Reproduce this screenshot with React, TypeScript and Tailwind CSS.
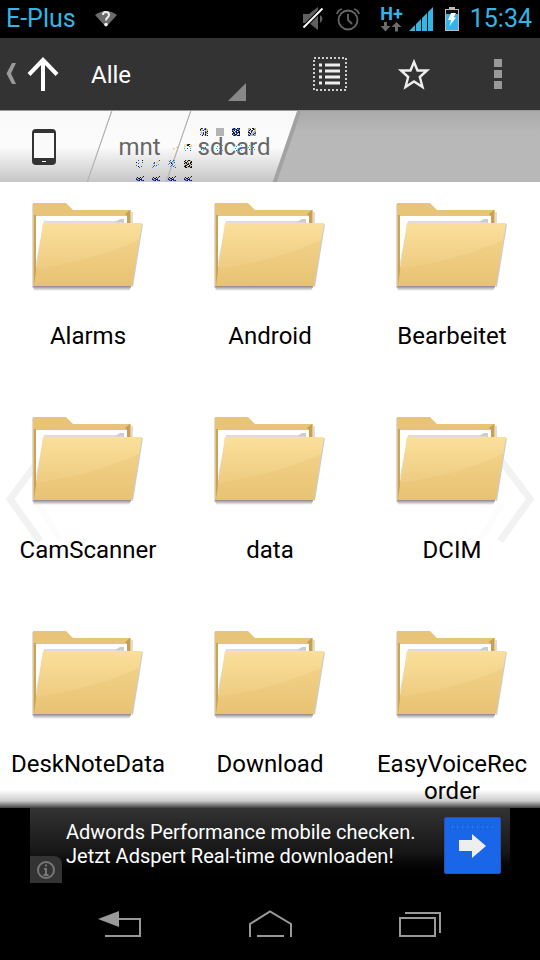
import React from "react";

const FOLDERS = ["Alarms", "Android", "Bearbeitet", "CamScanner", "data", "DCIM", "DeskNoteData", "Download", "EasyVoiceRecorder"];

function StatusBar() {
  return (
    <header className="flex h-[38px] items-center bg-black pr-2 pl-1.5 text-[25px] text-[#33b5e5]">
      <span>E-Plus</span>
      <svg className="ml-[18px]" width="24" height="18" viewBox="0 0 24 18" aria-hidden="true">
        <path d="M1 5Q12-3 23 5L12 17Z" fill="#6b6b6b" />
        <path d="M9 5q0-3 3-3t3 3q0 1-1.500 2.500T12 10.500" fill="none" stroke="#eee" strokeWidth="2" />
        <circle cx="12" cy="14.500" r="1.800" fill="#eee" />
      </svg>
      <div className="ml-auto flex items-center">
        <svg width="22" height="26" viewBox="0 0 22 26" aria-hidden="true">
          <path d="M1 8h6l9-7v23l-9-7H1zM18 9q5 3.500 0 8z" fill="#606060" />
          <path d="M1.500 21.500 20.500 2.500" stroke="#000" strokeWidth="4" />
          <path d="M1.500 21.500 20.500 2.500" stroke="#fff" strokeWidth="2" />
        </svg>
        <svg className="ml-3" width="24" height="24" viewBox="0 0 24 24" fill="none" stroke="#666" strokeWidth="1.800" aria-hidden="true">
          <circle cx="12" cy="13" r="9.500" />
          <path d="M12 7v6l4 4M1 7q1-4 5-5M23 7q-1-4-5-5" />
        </svg>
        <span className="ml-5 flex flex-col items-center">
          <span className="text-lg leading-4 font-bold">H+</span>
          <svg width="22" height="10" viewBox="0 0 22 10" fill="#6b6b6b" aria-hidden="true">
            <path d="M4 0h3v4h3.500l-5 5.500-5-5.500H4zM15 9.500V5h-3.500L16.500 0l5 5H18v4.500z" />
          </svg>
        </span>
        <svg className="ml-1.5" width="24" height="24" viewBox="0 0 24 24" fill="#33b5e5" aria-hidden="true">
          <path d="M0 24 6 18V24zM7 17l5-5V24H7zM13 11l5-5V24H13zM19 5l5-5v24h-5z" />
        </svg>
        <svg className="ml-3" width="14" height="24" viewBox="0 0 14 24" aria-hidden="true">
          <path d="M4 0h6v2h4v22H0V2h4z" fill="#bbb" />
          <path d="M1 3h12v4H1z" fill="#111" />
          <path d="M1 7h12v16H1z" fill="#33b5e5" />
          <path d="M6 6h5L8.500 10.500H11L4.500 19 6 13H3z" fill="#fff" />
        </svg>
        <span className="ml-[11px]">15:34</span>
      </div>
    </header>
  );
}

function ActionBar() {
  return (
    <div className="flex h-[72px] items-stretch bg-[#333] text-white">
      <button aria-label="Nach oben" className="pl-1.5">
        <svg width="54" height="36" viewBox="0 0 54 36" fill="none" aria-hidden="true">
          <path d="M6 7h4L5 17.500 10 28H6L0.500 17.500z" fill="#999" />
          <path d="M37 35V4M23 18.500 37 4 51 18.500" stroke="#fff" strokeWidth="4" />
        </svg>
      </button>
      <div className="relative ml-4 flex w-[170px]">
        <select aria-label="Filter" className="w-full appearance-none bg-transparent pt-0.5 pl-[15px] text-2xl text-white">
          <option>Alle</option>
        </select>
        <span className="pointer-events-none absolute right-0 bottom-[9px] size-[18px] bg-[#888] [clip-path:polygon(100%_0,100%_100%,0_100%)]" />
      </div>
      <div className="ml-auto grid grid-cols-[84px_84px_84px]">
        <button aria-label="Ansicht" className="flex items-center justify-center">
          <svg width="36" height="36" viewBox="0 0 36 36" aria-hidden="true">
            <rect x="2" y="2" width="32" height="32" fill="none" stroke="#ccc" strokeWidth="2" strokeDasharray="2 2" />
            <path d="M7 9h3M7 15h3M7 21h3M7 27h3M13 9h15M13 15h15M13 21h15M13 27h15" stroke="#eee" strokeWidth="3" />
          </svg>
        </button>
        <button aria-label="Favoriten" className="flex items-center justify-center">
          <svg width="34" height="34" viewBox="0 0 34 34" aria-hidden="true">
            <path d="M17 5 20.500 13.500 30 13.500 22.800 20 25.500 30 17 24.500 8.500 30 11.200 20 4 13.500 13.500 13.500Z" fill="none" stroke="#eee" strokeWidth="2.400" />
          </svg>
        </button>
        <button aria-label="Mehr" className="flex flex-col items-center justify-center gap-[3px]">
          <i className="size-2 bg-[#999]" />
          <i className="size-2 bg-[#999]" />
          <i className="size-2 bg-[#999]" />
        </button>
      </div>
    </div>
  );
}

const INK: Record<string, string> = { b: "#1c55d8", k: "#111", y: "#f0cd80", g: "#b4b4b4", c: "#25aee6", w: "#fff" };
const TILES: Record<string, string[]> = {
  mixed: ["ykbwgbyw", "kyywbkgg", "bygkwyyg", "wywwybyk", "ygybwkbg", "wyykwbyb", "bwgbykgw", "wykwybgk"],
  flat: ["gggggggg", "gggggggg", "gggggggg", "gggggggg", "gggggggg", "gggggggg", "gggggggg", "gggggggg"],
  dark: ["gbkgwkbk", "kkbbkgbb", "bgkwbkkg", "kbwbkwbk", "wkbgkbkk", "bkkwbbwk", "kgbkkwgb", "wbkbgkkk"],
  diagonal: ["gggwkkyg", "ggkwwkby", "gkybkwyg", "bwykyygg", "kkwbyggb", "ybkyggbb", "bybggkgg", "bkggggcg"],
  cross: [".kgykkg.", "kgwkyygk", "gkkggwkk", "kgkykgkg", "yggkkggk", "gkkgwkgy", "kkygkkgk", ".kkggykk"],
  arch: [".yybkky.", "y.ykk..y", "yy...byy", "........", "c..b..c.", "........", ".c....b.", "........"],
  streak: ["......yb", ".....yy.", "..b.yy..", ".cb..y..", "......c.", "yyb.b...", ".b.y....", "c......."],
  sparse: ["..b...k.", "........", "k..y..b.", "..b.....", "......y.", "b.......", "..k..b..", "...b...."],
  burst: ["y.b..bc.", ".by.c...", "..cby.b.", ".b.kcy..", "c..yb..y", "...b..c.", "y.c..b..", "......yb"],
  wedge: ["......yk", ".k..kyb.", "b.kkyb..", "kbybkk..", ".bbk.bbk"],
  bits: ["......c.", ".c......", "........", "c..c.b..", "........", ".b....c.", "...c....", "........"],
  dots: [".......y", "......y.", "...yy...", "...y...."],
};
const PLACED: [string, number, number][] = [
  ["mixed", 64, 0], ["flat", 80, 0], ["dark", 96, 0], ["diagonal", 112, 0],
  ["dots", 34, 18], ["arch", 48, 16], ["bits", 64, 16], ["bits", 80, 17], ["bits", 99, 17], ["bits", 112, 16],
  ["sparse", 0, 32], ["streak", 16, 32], ["burst", 32, 32], ["cross", 48, 32],
  ["wedge", 0, 48], ["wedge", 16, 48], ["wedge", 32, 48], ["wedge", 48, 48],
];

function Glitch() {
  return (
    <svg className="pointer-events-none absolute top-[17px] left-[136px]" width="128" height="53" shapeRendering="crispEdges" aria-hidden="true">
      {PLACED.map(([tile, x, y]) =>
        TILES[tile].flatMap((row, r) =>
          row.split("").map((ink, c) =>
            ink === "." ? null : <rect key={`${x}-${y}-${r}-${c}`} x={x + c} y={y + r} width="1" height="1" fill={INK[ink]} />,
          ),
        ),
      )}
    </svg>
  );
}

function Breadcrumbs() {
  const face = "absolute inset-y-0 right-0 -skew-x-[19deg] bg-linear-to-b from-[#f8f8f8] via-[#fcfcfc] via-50% to-[#c6c6c6]";
  return (
    <nav className="relative flex h-[72px] items-stretch overflow-hidden border-t border-[#999] bg-linear-to-b from-[#aaa] to-[#b8b8b8] to-30% text-2xl text-[#666]">
      <button aria-label="Gerät" className="relative z-30 flex w-[100px] items-center pl-[31px]">
        <span className={face + " -left-8 border-r border-[#b4b4b4]"} />
        <svg className="relative" width="26" height="36" viewBox="0 0 26 36" aria-hidden="true">
          <rect x="1" y="0" width="24" height="36" rx="4" fill="#333" />
          <rect x="3" y="4" width="20" height="25" fill="#fafafa" />
          <path d="M11 32h4v1h-4z" fill="#fff" />
        </svg>
      </button>
      <button className="relative z-20 w-[79px]">
        <span className={face + " left-0 border-r border-[#b4b4b4]"} />
        <span className="relative">mnt</span>
      </button>
      <button className="relative z-10 w-[110px]">
        <span className={face + " left-0 border-r-4 border-[#a2a2a2]"} />
        <span className="relative">sdcard</span>
      </button>
      <div className="pointer-events-none absolute inset-0 z-40">
        <Glitch />
      </div>
    </nav>
  );
}

function FolderIcon() {
  return (
    <svg className="relative" width="114" height="90" viewBox="0 0 114 90" aria-hidden="true">
      <defs>
        <linearGradient id="front" x1="0" y1="0" x2="0" y2="1">
          <stop offset="0" stopColor="#fbdf9a" />
          <stop offset="1" stopColor="#e9c578" />
        </linearGradient>
        <linearGradient id="base" x1="0" y1="0" x2="0" y2="1">
          <stop offset="0" stopColor="#888" />
          <stop offset="1" stopColor="#fff" />
        </linearGradient>
      </defs>
      <path d="M1 2v84h2V2z" fill="#ddd" />
      <path d="M2 84h98v1l-2 4H3z" fill="url(#base)" />
      <path d="M2 1h33l7 7h58v15L4 84H2z" fill="#e8c478" />
      <path d="M3 13h2v71H3z" fill="#c9a35a" />
      <path d="M94 12l5-4v16h-3V14z" fill="#c9a050" />
      <path d="M100 10h2v12h-2z" fill="#ddd" />
      <path d="M5 14h91v10H12L5 66z" fill="#fff" />
      <path d="M13 19h76v2H12L6 64 5 60z" fill="#ddd" />
      <path d="M84 20l5-3h4v4z" fill="#ccc" />
      <path d="M109 23l3-1-10 63-2-1z" fill="#ccc" />
      <path d="M12 21h99l-10 62-1 1H3z" fill="url(#front)" />
      <path d="M5 67Q65 58 108 38l-7 45-1 1H3z" fill="#e5bc68" fillOpacity=".25" />
    </svg>
  );
}

function PageArrow({ side }: { side: string }) {
  return (
    <svg className={side} width="60" height="92" viewBox="0 0 60 92" fill="none" aria-hidden="true">
      <path d="M36 5 6 45l30 42" stroke="#f2f2f2" strokeWidth="7" />
      <path d="M34 50l22 36" stroke="#fcfcfc" strokeWidth="6" />
    </svg>
  );
}

function FolderGrid() {
  return (
    <main className="relative flex-1 bg-white pt-5 pb-[3px] text-black">
      <PageArrow side="absolute top-[272px] left-1" />
      <PageArrow side="absolute top-[272px] right-1 -scale-x-100" />
      <div className="relative grid grid-cols-3 gap-x-1.5 gap-y-[66px]">
        {FOLDERS.map((name) => (
          <button key={name} className="flex flex-col items-center px-2">
            <FolderIcon />
            <span className="mt-[31px] w-full text-center text-2xl leading-[27px] break-all">{name}</span>
          </button>
        ))}
      </div>
      <div className="pointer-events-none absolute inset-x-0 bottom-0 h-[18px] bg-linear-to-b from-transparent via-black/20 via-60% to-black/75" />
    </main>
  );
}

function AdBanner() {
  return (
    <aside className="bg-black px-[30px]">
      <div className="relative flex h-[75px] items-center bg-linear-to-b from-[#333] via-[#161616] via-60% to-black pr-[9px] pl-9 text-white">
        <p className="flex-1 pb-1 text-xl leading-6">
          Adwords Performance mobile checken.
          <br />
          Jetzt Adspert Real-time downloaden!
        </p>
        <button aria-label="Öffnen" className="flex size-[57px] items-center justify-center rounded-xs border border-[#2c4fb4] bg-[#1a66e8]">
          <svg width="55" height="55" viewBox="0 0 55 55" aria-hidden="true">
            <path d="M7 9h42" stroke="#2fa0ee" strokeDasharray="1 4" />
            <path d="M5 7h45M5 11h45" stroke="#1c4fc0" strokeDasharray="1 4" />
            <path d="M14 22h13v-6l14 12-14 12v-7H14z" fill="#eee" />
          </svg>
        </button>
        <button aria-label="Info" className="absolute bottom-0 left-0 flex h-[27px] w-8 items-center justify-center rounded-tr-lg bg-[#333]">
          <svg width="20" height="20" viewBox="0 0 20 20" fill="none" stroke="#777" strokeWidth="2" aria-hidden="true">
            <circle cx="10" cy="10" r="8" />
            <path d="M8 9h2v6M7.500 15h5M9 5.500h2" />
          </svg>
        </button>
      </div>
    </aside>
  );
}

function NavBar() {
  return (
    <footer className="grid h-[77px] grid-cols-3 bg-black px-[45px] pt-[27px]">
      <button aria-label="Zurück" className="flex justify-center">
        <svg width="44" height="28" viewBox="0 0 44 28" fill="none" aria-hidden="true">
          <path d="M0 9 21 1v16z" fill="#999" />
          <path d="M20 9h22v17H7" stroke="#999" strokeWidth="2" />
        </svg>
      </button>
      <button aria-label="Startseite" className="flex justify-center">
        <svg width="44" height="28" viewBox="0 0 44 28" fill="none" stroke="#999" strokeWidth="2" aria-hidden="true">
          <path d="M2 27V14L22 1.500 43 14v13M9 26h27" />
        </svg>
      </button>
      <button aria-label="Letzte Apps" className="flex justify-center">
        <svg width="44" height="28" viewBox="0 0 44 28" fill="none" stroke="#999" strokeWidth="2" aria-hidden="true">
          <path d="M2 8h35v18H2zM7 3h35v20" />
        </svg>
      </button>
    </footer>
  );
}

export default function App() {
  return (
    <div className="flex min-h-screen flex-col bg-black font-[Roboto,sans-serif]">
      <StatusBar />
      <ActionBar />
      <Breadcrumbs />
      <FolderGrid />
      <AdBanner />
      <NavBar />
    </div>
  );
}
